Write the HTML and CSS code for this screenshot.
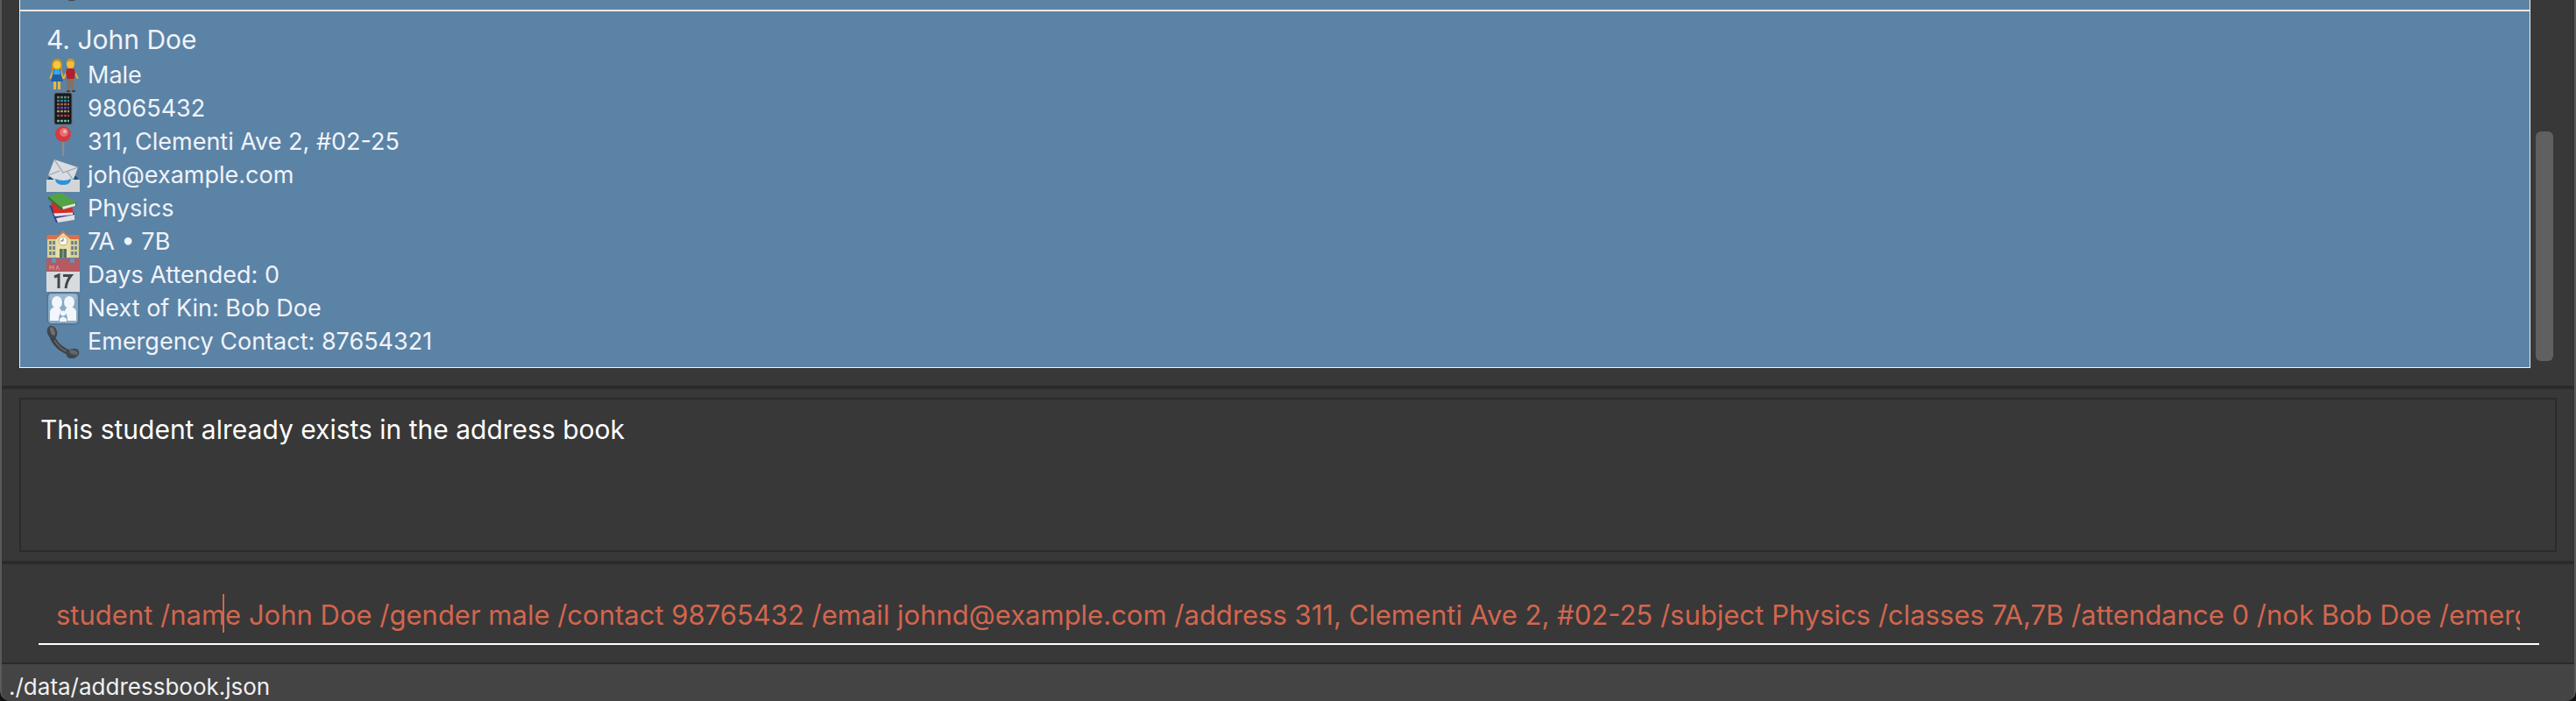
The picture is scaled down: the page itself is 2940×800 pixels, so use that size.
FILE: index.html
```html
<!DOCTYPE html>
<html lang="en">
<head>
<meta charset="utf-8">
<title>Address Book</title>
<link rel="stylesheet" href="styles.css">
</head>
<body>
<div class="window">
  <main class="list-panel">
    <ol class="student-list">
      <li class="card card-previous">
        <div class="row">
          <svg class="icon" viewBox="0 0 38 38" aria-hidden="true"><use href="#handset"/></svg>
        </div>
      </li>
      <li class="card">
        <h2 class="name">4. John Doe</h2>
        <div class="row">
          <svg class="icon" viewBox="0 0 38 38" aria-hidden="true">
            <path d="M8 13 4.500 22M16 13l3 9M24 13l-4 9M31 13l4.500 9" stroke="#e3b23c" stroke-width="2" stroke-linecap="round"/>
            <path d="M9.500 25v10M14.500 25v10" stroke="#e8b93c" stroke-width="3"/>
            <path d="M6 8q0-8 6-8t6 8v4H6z" fill="#c9901d"/>
            <circle cx="12" cy="7" r="4.500" fill="#f5c842"/>
            <path d="M8 12h8l1 7 2 7H5l2-7z" fill="#1f5fa8"/>
            <path d="M9 12h6l1 6H8z" fill="#3aa5e8"/>
            <path d="M23.500 22h8l-.5 14h-3l-.5-9-1 9h-3z" fill="#8d6e5c"/>
            <ellipse cx="27.500" cy="6" rx="4.500" ry="5.500" fill="#f2bd35"/>
            <path d="M23 4q0-4 4.500-4T32 4q-4-2-9 0z" fill="#d49a22"/>
            <path d="M23 12q4.500-2 9 0l1 4-1.500 7h-8L22 16z" fill="#b3202c"/>
            <path d="M23 36h4v2h-4zM29 36h4v2h-4z" fill="#4b3b3b"/>
          </svg>
          <span>Male</span>
        </div>
        <div class="row">
          <svg class="icon" viewBox="0 0 38 38" aria-hidden="true">
            <rect x="9" y="1" width="20" height="36" rx="2" fill="#17181c" stroke="#66676b"/>
            <g stroke-width="2.500" stroke-dasharray="3 1">
              <path d="M12 6h14" stroke="#5d8e68"/><path d="M12 10h14" stroke="#367fb0"/>
              <path d="M12 14h14" stroke="#a4623f"/><path d="M12 18h14" stroke="#644cac"/>
              <path d="M12 22h14" stroke="#a39653"/><path d="M12 27h14" stroke="#a53e55"/>
              <path d="M12 33h14" stroke="#65bca0"/>
            </g>
          </svg>
          <span>98065432</span>
        </div>
        <div class="row">
          <svg class="icon" viewBox="0 0 38 38" aria-hidden="true">
            <path d="M17.500 17h3L20 35h-2z" fill="#8d8a91"/>
            <circle cx="19" cy="10" r="9" fill="#d33a40"/>
            <circle cx="20" cy="8" r="5" fill="#e56f70"/>
            <circle cx="21" cy="7" r="2" fill="#f5b9b7"/>
          </svg>
          <span>311, Clementi Ave 2, #02-25</span>
        </div>
        <div class="row">
          <svg class="icon" viewBox="0 0 38 38" aria-hidden="true">
            <path d="M4 20h30l4 6H0z" fill="#1b5484"/>
            <path d="M9 1 36 10l-6 16-14 3L2 19z" fill="#d9dce0"/>
            <path d="M9 1l10 15L36 10M2 19l13-5M31 25l-7-10" fill="none" stroke="#9da3aa" stroke-width="1.200"/>
            <path d="M10 23q10 4 18 0v8H11z" fill="#2f91dc"/>
            <path d="M0 24h10q1 6 9 6t9-6h10v14H0z" fill="#d3d6d8"/>
          </svg>
          <span>joh@example.com</span>
        </div>
        <div class="row">
          <svg class="icon" viewBox="0 0 38 38" aria-hidden="true">
            <path d="M3 15 11 35l21-3v-7z" fill="#353c8c"/>
            <path d="M11 30l21-4v6l-19 3z" fill="#dfdfe5"/>
            <path d="M5 12 9 27l22-3-3-10z" fill="#d22c2d"/>
            <path d="M8 24.500l22-1v2.500L10 28z" fill="#ede7e7"/>
            <path d="M2 5 17 1l17 11-17 6z" fill="#53a345"/>
            <path d="M2 5v3l15 12 17-4v-4l-17 6z" fill="#2f7732"/>
            <path d="M18 17l15-4v3l-14 4z" fill="#dfe7dc"/>
          </svg>
          <span>Physics</span>
        </div>
        <div class="row">
          <svg class="icon" viewBox="0 0 38 38" aria-hidden="true">
            <path d="M1 14h36v23H1z" fill="#d9cf98"/>
            <path d="M1 11h36l1 5H0z" fill="#d9714c"/>
            <path d="M19 6l8 8H11z" fill="#d9714c"/>
            <path d="M11 16l8-7 8 7v21H11z" fill="#e9dfa9"/>
            <circle cx="19" cy="18" r="5" fill="#fbf9ec" stroke="#b8ab75"/>
            <path d="M19 15v3h-3" fill="none" stroke="#666" stroke-width="1"/>
            <path d="M4.500 18v17M8.500 18v17M29.500 18v17M33.500 18v17" stroke="#5f7f8c" stroke-width="2.500" stroke-dasharray="4 2"/>
            <path d="M15 27h8v10h-8z" fill="#4f7167"/><path d="M19 27v10" stroke="#c2b775"/>
          </svg>
          <span>7A • 7B</span>
        </div>
        <div class="row">
          <svg class="icon" viewBox="0 0 38 38" aria-hidden="true">
            <path d="M0 0h38v38H0z" fill="#d8dbde"/>
            <path d="M0 0h38v15H0z" fill="#b45a60"/>
            <path d="M6 0h5v5H6zM27 0h5v5h-5z" fill="#6d8fae"/>
            <path d="M4 13V8l2 3 2-3v5M11 13l1.500-5 2 5" fill="none" stroke="#d59a9f"/>
            <path d="M9 21l5-2v15M19 19.500h9q-5 6-6 14.500" fill="none" stroke="#444649" stroke-width="3"/>
          </svg>
          <span>Days Attended: 0</span>
        </div>
        <div class="row">
          <svg class="icon" viewBox="0 0 38 38" aria-hidden="true">
            <rect x="1" y="1" width="36" height="36" rx="5" fill="#86a9c6" stroke="#527896" stroke-width="2"/>
            <path d="M4 3h30v6H4z" fill="#9db8ce"/>
            <g fill="#f3f6fa">
              <ellipse cx="12" cy="12" rx="6" ry="7"/><ellipse cx="26" cy="12" rx="6" ry="7"/>
              <path d="M4 22q1-4 7-5 6 1 6 6-3 3-3 10H4zM34 22q-1-4-7-5-6 1-6 6 3 3 3 10h10z"/>
              <circle cx="19" cy="24.500" r="3"/><path d="M15 31q4-5 8 0v3h-8z"/>
            </g>
          </svg>
          <span>Next of Kin: Bob Doe</span>
        </div>
        <div class="row">
          <svg class="icon" viewBox="0 0 38 38" aria-hidden="true">
            <g id="handset">
              <path d="M5 8q4 19 26 25" fill="none" stroke="#3c4045" stroke-width="6"/>
              <ellipse cx="6.500" cy="8" rx="5.500" ry="7.500" transform="rotate(-20 6.500 8)" fill="#42464b"/>
              <ellipse cx="30" cy="32.500" rx="7.500" ry="5.500" transform="rotate(-20 30 32.500)" fill="#42464b"/>
              <ellipse cx="7" cy="7" rx="2.500" ry="5" transform="rotate(-20 7 7)" fill="#6a6f74"/>
              <ellipse cx="31" cy="31" rx="5" ry="2.500" transform="rotate(20 31 31)" fill="#62676c"/>
              <path d="M9 17q6 10 14 13" fill="none" stroke="#64696e" stroke-width="1.500"/>
            </g>
          </svg>
          <span>Emergency Contact: 87654321</span>
        </div>
      </li>
    </ol>
    <div class="scroll-track"><div class="scroll-thumb"></div></div>
  </main>
  <section class="result-panel">
    <output class="result">This student already exists in the address book</output>
  </section>
  <form class="command-panel">
    <div class="command-field">
      <input class="command" type="text" aria-label="Command" spellcheck="false" value="student /name John Doe /gender male /contact 98765432 /email johnd@example.com /address 311, Clementi Ave 2, #02-25 /subject Physics /classes 7A,7B /attendance 0 /nok Bob Doe /emergency 87654321">
      <span class="caret"></span>
    </div>
  </form>
  <footer class="status">./data/addressbook.json</footer>
</div>
</body>
</html>
```
FILE: styles.css
```css
* {
  box-sizing: border-box;
}

body {
  margin: 0;
  background: #111;
  font-family: Inter, "Liberation Sans", sans-serif;
}

.window {
  display: flex;
  flex-direction: column;
  height: 100vh;
  overflow: hidden;
  background: #383838;
  border: solid #5a5a5a;
  border-width: 0 2px;
  border-radius: 0 0 12px 12px;
}

.list-panel {
  flex: 1;
  min-height: 0;
  display: flex;
  gap: 6px;
  padding: 0 24px 20px 20px;
}

.student-list {
  flex: 1;
  min-width: 0;
  display: flex;
  flex-direction: column;
  justify-content: flex-end;
  overflow: hidden;
  margin: 0;
  padding: 0;
  list-style: none;
  border: solid #f4f4f4;
  border-width: 0 1px 1px;
}

.card {
  flex: none;
  padding: 10px 30px;
  background: #5b83a5;
  color: #f0f3fa;
}

.card-previous {
  border-bottom: 2px solid #f6e7e4;
}

.name {
  margin: 0;
  font-size: 30px;
  font-weight: 400;
  line-height: 44px;
}

.row {
  display: flex;
  gap: 9px;
  font-size: 27px;
  line-height: 38px;
}

.icon {
  flex: none;
  width: 38px;
  height: 38px;
}

.scroll-track {
  display: flex;
  flex-direction: column;
  justify-content: flex-end;
  width: 20px;
  padding-bottom: 8px;
}

.scroll-thumb {
  height: 262px;
  border-radius: 6px;
  background: #606060;
}

.result-panel {
  padding: 10px 20px;
  border: solid #2b2b2b;
  border-width: 4px 0;
}

.result {
  display: block;
  min-height: 176px;
  padding: 12px 22px;
  border: 2px solid #2b2b2b;
  color: #fff;
  font-size: 30px;
  line-height: 44px;
}

.command-panel {
  padding: 20px 40px 20px 42px;
}

.command-field {
  position: relative;
  padding: 0 22px 0 20px;
  border-bottom: 2px solid #fff;
}

.command {
  display: block;
  width: 100%;
  height: 70px;
  padding: 4px 0 0;
  border: 0;
  outline: 0;
  background: transparent;
  color: #d2664f;
  font: inherit;
  font-size: 31px;
}

.caret {
  position: absolute;
  top: 14px;
  left: 210px;
  width: 2px;
  height: 44px;
  background: #d2664f;
}

.status {
  padding: 10px 8px 0;
  border-top: 2px solid #2b2b2b;
  background: #444;
  color: #f0f0f0;
  font-size: 26px;
  line-height: 32px;
}
```
